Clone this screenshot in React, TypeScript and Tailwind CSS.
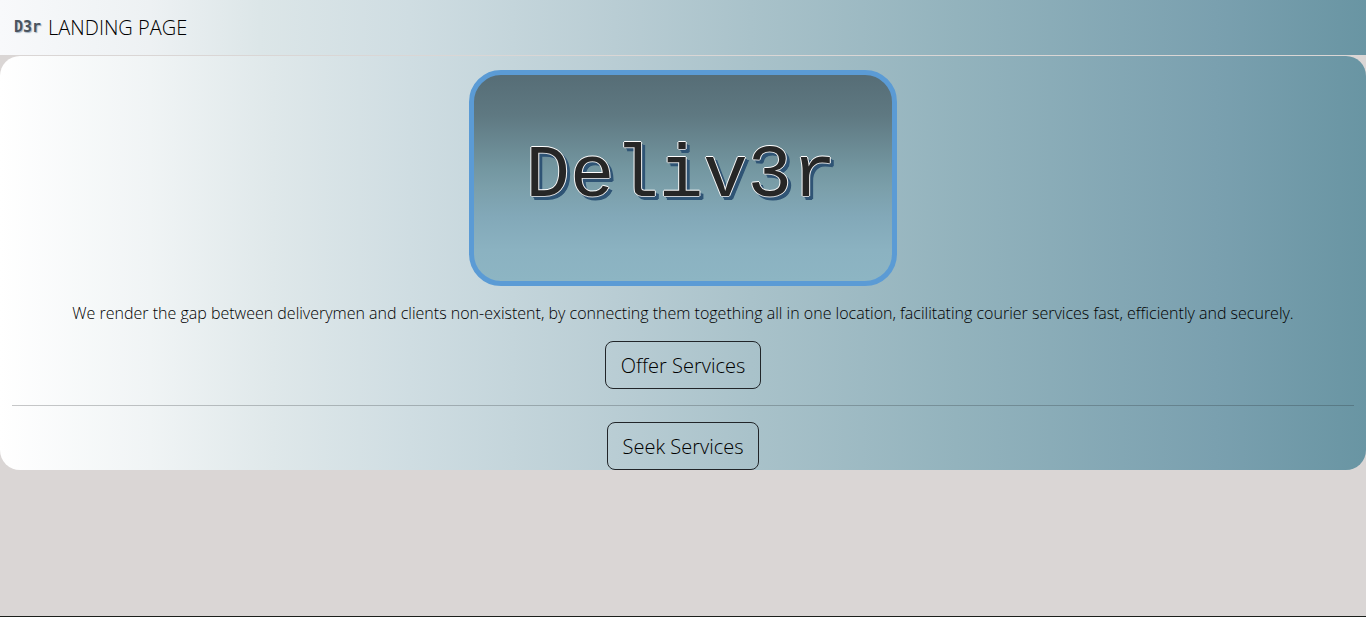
import React from "react";

const pageGradient =
  "bg-[linear-gradient(to_right,#ffffff_0%,#f0f4f5_11%,#dfe8ea_20%,#cfdde2_30%,#b9cdd4_45%,#a9c2ca_55%,#93b3bd_70%,#7aa0af_89%,#6995a3_100%)]";

const navGradient =
  "bg-[linear-gradient(to_right,#f8f9fb_0%,#edf1f3_11%,#dce6e8_19%,#cfdde2_30%,#b9cdd4_45%,#a9c2ca_55%,#93b3bd_70%,#7aa0af_89%,#6995a3_100%)]";

function ServiceButton({ children }: { children: React.ReactNode }) {
  return (
    <button
      type="button"
      className="h-12 rounded-lg border border-[#212529] px-[15px] pt-0.5 text-[20px] font-light leading-[30px] text-black"
    >
      {children}
    </button>
  );
}

function Logo() {
  return (
    <div className="mt-3.5 flex h-[216px] w-[428px] max-w-full items-center justify-center rounded-[32px] border-[5px] border-[#5b9bd5] bg-[linear-gradient(to_bottom,#566d76_0%,#5f7982_20%,#7396a0_45%,#7b9faa_55%,#82a8b8_68%,#8bb2c1_85%,#8db5c3_100%)] pr-1 pb-1">
      <span className="font-['Liberation_Mono',monospace] text-[74px] leading-none text-[#262626] [text-shadow:1px_0_#f2f2f2,-1px_0_#f2f2f2,0_1px_#c8cdd2,0_-1px_#ffffff,4px_3px_#2f5475,3px_4px_#2f5475,3px_3px_#2f5475,2px_2px_#2f5475]">
        Deliv3r
      </span>
    </div>
  );
}

export default function App() {
  return (
    <div className="flex min-h-screen flex-col border-b border-[#1b1f1b] bg-[#dad6d5] font-['Open_Sans','Noto_Sans',sans-serif] text-black">
      <nav className={`flex h-[55px] items-center px-3.5 ${navGradient}`}>
        <a href="#" className="flex items-center gap-[7px] text-[20px] font-light leading-[30px] text-black">
          <span className="pb-0.5 font-['DejaVu_Sans_Mono',monospace] text-[15px] font-bold leading-5 text-[#4a545e] [text-shadow:1px_1px_1px_#a5b5c4]">
            D3r
          </span>
          <span>LANDING PAGE</span>
        </a>
      </nav>
      <main className={`mt-px flex flex-col items-center rounded-[20px] px-3 ${pageGradient}`}>
        <Logo />
        <p className="mt-4 mb-4 text-center text-[16px] font-light leading-[23px]">
          We render the gap between deliverymen and clients non-existent, by connecting them togething all in one
          location, facilitating courier services fast, efficiently and securely.
        </p>
        <ServiceButton>Offer Services</ServiceButton>
        <hr className="my-4 w-full border-t border-[#212529]/25" />
        <ServiceButton>Seek Services</ServiceButton>
      </main>
    </div>
  );
}
